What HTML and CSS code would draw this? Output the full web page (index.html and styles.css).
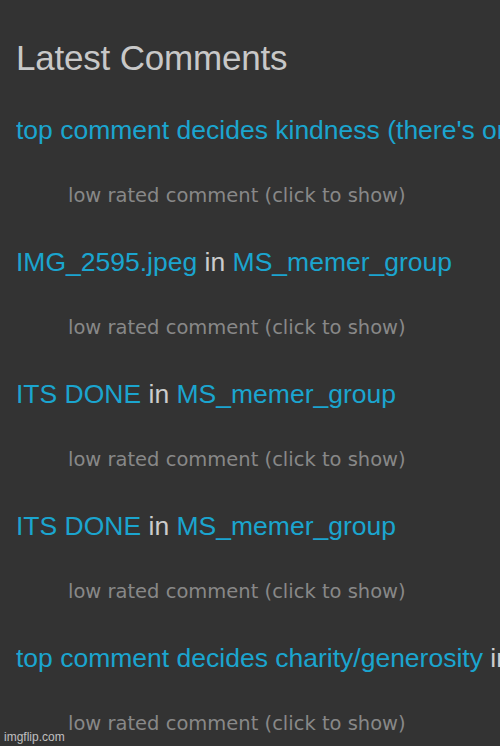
FILE: index.html
```html
<!DOCTYPE html>
<html lang="en">
<head>
    <meta charset="UTF-8">
    <meta name="viewport" content="width=device-width, initial-scale=1.0">
    <title>Latest Comments</title>
    <link rel="stylesheet" href="styles.css">
</head>
<body>
    <div class="panel">
        <h2 class="panel-title">Latest Comments</h2>

        <div class="com">
            <div class="com-head"><a href="#">top comment decides kindness (there's one in the comments)</a></div>
            <div class="com-low">low rated comment (click to show)</div>
        </div>

        <div class="com">
            <div class="com-head"><a href="#">IMG_2595.jpeg</a> in <a href="#">MS_memer_group</a></div>
            <div class="com-low">low rated comment (click to show)</div>
        </div>

        <div class="com">
            <div class="com-head"><a href="#">ITS DONE</a> in <a href="#">MS_memer_group</a></div>
            <div class="com-low">low rated comment (click to show)</div>
        </div>

        <div class="com">
            <div class="com-head"><a href="#">ITS DONE</a> in <a href="#">MS_memer_group</a></div>
            <div class="com-low">low rated comment (click to show)</div>
        </div>

        <div class="com">
            <div class="com-head"><a href="#">top comment decides charity/generosity</a> in <a href="#">fun</a></div>
            <div class="com-low">low rated comment (click to show)</div>
        </div>
    </div>

    <div class="watermark">imgflip.com</div>
</body>
</html>
```

FILE: styles.css
```css
* { margin: 0; padding: 0; box-sizing: border-box; }

body {
    background: #333333;
    font-family: 'Liberation Sans', Arial, sans-serif;
    height: 746px;
    overflow: hidden;
    position: relative;
}

.panel {
    padding-left: 16px;
}

.panel-title {
    padding-top: 19px;
    font-size: 35px;
    font-weight: 400;
    line-height: 78px;
    color: #c8c8c8;
    letter-spacing: -0.2px;
}

.com-head {
    font-size: 26.5px;
    line-height: 66px;
    color: #cccccc;
    white-space: nowrap;
    overflow: hidden;
}

.com-head a {
    color: #1ba5cf;
    text-decoration: none;
}

.com-low {
    padding-left: 52px;
    font-family: 'DejaVu Sans', Verdana, sans-serif;
    font-size: 19.5px;
    line-height: 66px;
    color: #888888;
    cursor: pointer;
}

.watermark {
    position: absolute;
    left: 4px;
    bottom: 2px;
    font-size: 12px;
    color: rgba(255, 255, 255, 0.7);
}
```
